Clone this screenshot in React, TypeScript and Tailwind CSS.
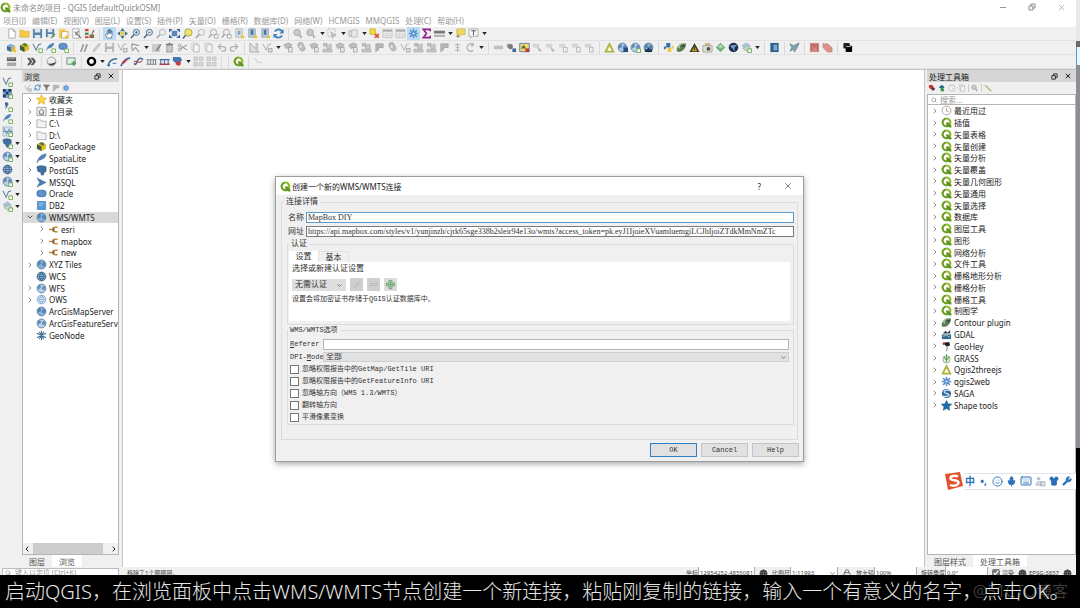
import React from 'react';
import clsx from 'clsx';
import { Search, X, Smile, Mic, Keyboard, Shirt, Wrench, ChevronRight, ChevronDown, ChevronLeft, Lock, Filter, RefreshCw } from 'lucide-react';

const sans = 'font-["Noto_Sans","Noto_Sans_CJK_SC",sans-serif]';
const mono = 'font-["Liberation_Mono","Noto_Sans_CJK_SC",monospace]';

const globe = (fill: string) => (
  <>
    <circle cx="6" cy="6" r="4.8" fill={fill} stroke="#3f6a98" strokeWidth=".8" />
    <path d="M2 3c2-2 4 0 3.500 2S2.500 6 2 8M8 3c2 0 2.500 2 2 4l-2 1c-2-1-2-3 0-5z" fill="#3f6a98" opacity=".65" />
  </>
);

const grid = (fill: string, line: string) => (
  <>
    <circle cx="6" cy="6" r="4.8" fill={fill} stroke={line} strokeWidth=".8" />
    <path d="M1.5 6h9M6 1.2c-2.6 3-2.6 6.6 0 9.6M6 1.2c2.6 3 2.6 6.6 0 9.6M2.2 3.5h7.6M2.2 8.5h7.6" fill="none" stroke={line} strokeWidth=".7" />
  </>
);

const plus = <path d="M7.500 7.500h4v4h-4z" fill="#fff" stroke="#6aa84f" strokeWidth="1" />;
const star = <path d="M9.500 7l.8 1.700 1.700.2-1.300 1.200.3 1.700-1.500-.8-1.500.8.3-1.700L7 8.900l1.700-.2z" fill="#e8c52c" />;

// All glyphs share a 12x12 box
const glyphs: Record<string, React.ReactNode> = {
  qgis: (
    <>
      <path d="M6 1.7a4.2 4.2 0 1 0 2.3 7.7" fill="none" stroke="#6a9c1f" strokeWidth="2.3" />
      <path d="M6 1.7a4.2 4.2 0 0 1 3.7 6.1" fill="none" stroke="#8fba2a" strokeWidth="2.3" />
      <path d="M5.6 5.6h2.2l3.6 3.8v2.1H9.2L5.6 7.8z" fill="#5f9320" />
      <path d="M5.6 5.6h1.6v1.6z" fill="#f3d13a" />
    </>
  ),
  page: <path d="M3 1h4.500L10 3.500V11H3zM7.500 1v2.500H10" fill="#fff" stroke="#9a9a9a" strokeWidth=".8" />,
  folder: <path d="M1 2.500h4l1 1.200h5V10H1z" fill="#f5c945" stroke="#d5a42a" strokeWidth=".6" />,
  folderGray: <path d="M1 2h4l1 1.500h5V10.500H1z" fill="#f3f3f3" stroke="#9a9a9a" strokeWidth=".8" />,
  save: <><path d="M1 1h10v10H1z" fill="#5682a8" /><path d="M3 1h6v4H3zM3 7.500h6V11H3z" fill="#dce8f0" /></>,
  saveAs: <><path d="M1 1h9v9H1z" fill="#5682a8" /><path d="M3 1h5v3.500H3zM3 6.500h5V10H3z" fill="#dce8f0" /><path d="M6 11l4.500-5 1 1L7 11.500z" fill="#62a04a" /></>,
  layout: <><path d="M1 1h7v10H1z" fill="#f1d257" /><path d="M4 4h7v7H4z" fill="#fff" stroke="#b8982b" strokeWidth=".8" />{star}</>,
  layoutMgr: <><path d="M2 1h7v10H2z" fill="#fff" stroke="#999" strokeWidth=".8" /><path d="M4 4l7 7M8 3l-3 5" stroke="#777" strokeWidth="1.300" /></>,
  style: <><path d="M1 1h4v2.500H1z" fill="#cc4a3d" /><path d="M1 5h4v2.500H1z" fill="#4b8d4f" /><path d="M1 9h4v2H1z" fill="#c7472f" /><path d="M7 10l3-8 1.500 1zM6 7h5v4H6z" fill="#8a6a4a" /></>,
  hand: <path d="M3.500 11L1.500 7l1-.7L4 7.500V2.500h1.200V6V1.500h1.200V6V2h1.200v4.200V3.300h1.200V8L8 11z" fill="#fff" stroke="#48657f" strokeWidth=".8" />,
  panSel: <><path d="M6 0l2.500 3.500h-5zM6 12l2.500-3.500h-5zM0 6l3.500-2.500v5zM12 6L8.500 3.500v5z" fill="#3f6f9d" /><path d="M4 4h4v4H4z" fill="#e9d03c" /></>,
  zoomIn: <><circle cx="7" cy="4.700" r="3.300" fill="#dce9f4" stroke="#49688a" strokeWidth="1" /><path d="M4.500 7L1 11" stroke="#49688a" strokeWidth="1.600" /><path d="M5.500 4.700h3M7 3.200v3" stroke="#355" strokeWidth=".8" /></>,
  zoomOut: <><circle cx="7" cy="4.700" r="3.300" fill="#dce9f4" stroke="#49688a" strokeWidth="1" /><path d="M4.500 7L1 11" stroke="#49688a" strokeWidth="1.600" /><path d="M5.500 4.700h3" stroke="#355" strokeWidth=".8" /></>,
  zoomFull: <><path d="M0 1h4L0 5zM12 1H8l4 4zM0 11h4L0 7zM12 11H8l4-4z" fill="#2f62a0" /><path d="M3 3h6v6H3z" fill="#5b86b5" /></>,
  zoomSel: <><circle cx="7" cy="5" r="4" fill="#efe36a" stroke="#a29b45" strokeWidth=".9" /><path d="M4 8l-3 3.500" stroke="#49688a" strokeWidth="1.600" /></>,
  zoomGray: <><circle cx="7" cy="4.700" r="3.300" fill="#eee" stroke="#b2b2b2" strokeWidth="1" /><path d="M4.500 7L1 11" stroke="#a2a2a2" strokeWidth="1.600" /></>,
  zoomGray2: <><circle cx="6" cy="4.700" r="3.300" fill="#eee" stroke="#aaa" strokeWidth="1" /><path d="M3.500 7L1 10.500" stroke="#a2a2a2" strokeWidth="1.600" /><path d="M7 7h4v4H7z" fill="#f5f5f5" stroke="#999" strokeWidth=".8" /></>,
  bookmark: <><path d="M2 1h7v9H2z" fill="#dfe6ec" stroke="#9aa" strokeWidth=".8" /><path d="M4 3h3v5l-1.500-1L4 8z" fill="#8aa3bd" />{star}</>,
  bookmark2: <><path d="M2 1h7v9H2z" fill="#c3d2e2" stroke="#7891ab" strokeWidth=".8" /><path d="M4 2h3v6l-1.500-1L4 8z" fill="#4a73a0" />{star}</>,
  refresh: <><path d="M10.500 5A4.600 4.600 0 0 0 2 4M1.500 7A4.600 4.600 0 0 0 10 8" fill="none" stroke="#3f83bd" strokeWidth="2" /><path d="M11.500 1v5h-4.500zM.5 11V6.500h4.500z" fill="#3f83bd" /></>,
  identify: <><circle cx="4.500" cy="5" r="3.600" fill="#c9c9c9" stroke="#aaa" /><path d="M6 5l5 5-2 .2-1 1.800z" fill="#b2b2b2" /></>,
  select: <><path d="M1 1h8v8H1z" fill="none" stroke="#b5b5b5" strokeDasharray="1.500 1" /><path d="M4 4l6 4-3 .5-1 3z" fill="#c4c4c4" stroke="#999" strokeWidth=".5" /></>,
  stack: <><path d="M1 3h6v6H1z" fill="#ddd" stroke="#b5b5b5" /><path d="M4 2h6v8H4z" fill="#e9e9e9" stroke="#bbb" /></>,
  deselect: <><path d="M1 1h6v6H1z" fill="#f4d92f" stroke="#b7a12a" strokeWidth=".6" /><path d="M6 6h5v5H6z" fill="#ee9570" /><path d="M6.500 6.500l4 4M10.500 6.500l-4 4" stroke="#c8322b" /></>,
  table: <><path d="M1 1.500h10v9H1z" fill="#eee" stroke="#bbb" strokeWidth=".8" /><path d="M1 2h10v2H1z" fill="#aaa" /><path d="M1 6.500h10M1 8.500h10M4.500 3v8M8 3v8" stroke="#ccc" strokeWidth=".6" /></>,
  gear: <><circle cx="6" cy="6" r="3" fill="#5f93cf" /><path d="M6 .8v10.400M.8 6h10.400M2.300 2.300l7.400 7.400M9.700 2.300L2.300 9.700" stroke="#5f93cf" strokeWidth="1.600" /><circle cx="6" cy="6" r="1.200" fill="#dcebf7" /></>,
  sigma: <path d="M10 3.500V1.500H2.500L6 6l-3.500 4.500H10v-2" fill="none" stroke="#8e2290" strokeWidth="1.800" />,
  measure: <><path d="M0 3h12v3H0z" fill="#777" /><path d="M0 7.500h12v2H0z" fill="#aaa" /></>,
  tip: <><path d="M2 1h9v6H7l-3 3V7H2z" fill="#efd95a" stroke="#b9a54a" strokeWidth=".7" /><path d="M1 9l3-2v4z" fill="#8b8b8b" /></>,
  textT: <><path d="M1 1h10v8H5l-2 2V9H1z" fill="#f5f5f5" stroke="#999" strokeWidth=".8" /><path d="M3.500 3h5M6 3v5" stroke="#555" /></>,
  cubes: <><path d="M1 4l4-2 5 2-4 2z" fill="#7fb1d9" /><path d="M1 4l5 2v5L1 9z" fill="#3c6e9f" /><path d="M10 4L6 6v5l4-2z" fill="#dcae45" />{star}</>,
  geopkg: <><path d="M1 3.500L6 1l5 2.500v5L6 11 1 8.500z" fill="#e2be2c" /><path d="M1 3.500l5 2.500v5L1 8.500z" fill="#465d3d" /><path d="M3 3l5 2.500 1-3L6 1z" fill="#56793f" /></>,
  vnew: <><path d="M1 2l3.500 7L7 3l3-1" fill="none" stroke="#67809a" strokeWidth="1.100" />{plus}</>,
  feather: <path d="M1 11C2 5 6 1 11 1c0 4-4 6-8 7z" fill="#5286b8" stroke="#345f8c" strokeWidth=".5" />,
  featherNew: <><path d="M1 10C2 5 5 1 10 1c0 3-3 6-7 6z" fill="#5286b8" />{plus}</>,
  oval: <><rect x="1" y="2.500" width="10" height="7" rx="3" fill="#5f92ca" stroke="#3465a0" strokeWidth=".8" /></>,
  ovalNew: <><rect x="1" y="1.500" width="9" height="6.500" rx="3" fill="#5f92ca" stroke="#3465a0" strokeWidth=".8" />{plus}</>,
  pencils: <path d="M2 11L5 2l2 1-3 8zM6 11l3-9 2 1-3 8z" fill="#a3a3a3" />,
  pencil: <path d="M2 11l1-3 6-7 1.500 1.500-6 7z" fill="#c8c8c8" stroke="#aaa" strokeWidth=".5" />,
  saveGray: <><path d="M1 1h10v10H1z" fill="#b5b5b5" /><path d="M3 1h6v4H3zM3 7.500h6V11H3z" fill="#eee" /></>,
  nodes: <><path d="M1 2l3.500 7L7 3l3-1" fill="none" stroke="#aaa" /><path d="M7 7h4v4H7z" fill="#ddd" stroke="#999" strokeWidth=".8" /></>,
  mesh: <><path d="M1 1h10v10H1z" fill="#dbe5ec" stroke="#8ba2b5" strokeWidth=".7" /><path d="M2 2l3 7 3-6 3 5M1 6h10" fill="none" stroke="#58809f" strokeWidth=".9" />{plus}</>,
  vertex: <path d="M2 10l4-4M2 2l8 2M6 6l4 5M2 2v6" stroke="#9a9a9a" strokeWidth="1.300" fill="none" />,
  formEdit: <><path d="M1 2h9v9H1z" fill="#ccc" /><path d="M5 9l5-7 1.500 1L7 10z" fill="#888" /></>,
  trash: <><path d="M3 3.500h6V11H3z" fill="#c9c9c9" stroke="#888" strokeWidth=".8" /><path d="M2 2.500h8M5 1.500h2" stroke="#777" strokeWidth="1.300" /></>,
  cut: <><path d="M11 3L4 7.500M11 8.500L4 4.500" stroke="#888" /><circle cx="2.800" cy="3.800" r="1.500" fill="none" stroke="#999" /><circle cx="2.800" cy="8.200" r="1.500" fill="none" stroke="#999" /></>,
  copy: <><path d="M2 1h6v8H2z" fill="#eee" stroke="#ccc" /><path d="M4 3h6v8H4z" fill="#f3f3f3" stroke="#aaa" strokeWidth=".8" /></>,
  undo: <path d="M3 5h5a2.500 2.500 0 0 1 0 5H6M5.500 2L2.500 5l3 3" fill="none" stroke="#b2b2b2" strokeWidth="1.400" />,
  redo: <path d="M9 5H4a2.500 2.500 0 0 0 0 5h2M6.500 2l3 3-3 3" fill="none" stroke="#b2b2b2" strokeWidth="1.400" />,
  ruler: <><path d="M1 1v10h10z" fill="#ddd" stroke="#aaa" /><path d="M7 1h3v8H7z" fill="#c5c5c5" /></>,
  shape: <><path d="M1 3l5-2 4 2-2 3-5 1z" fill="#bdbdbd" stroke="#a0a0a0" strokeWidth=".7" /><path d="M6 6h4v5H6z" fill="#e8e8e8" stroke="#999" strokeWidth=".8" /></>,
  shape2: <><path d="M2 4a3 3 0 0 1 6-1l2 4a3 3 0 0 1-5 2z" fill="#bdbdbd" stroke="#a0a0a0" strokeWidth=".8" /><circle cx="5" cy="5" r="1.300" fill="#eee" /></>,
  shape3: <><path d="M1 1h5v4H1z" fill="#bbb" /><path d="M5 4l5-2v5H5zM1 8h5v3H1zM7 8h4v3H7z" fill="#c9c9c9" stroke="#a0a0a0" strokeWidth=".6" /></>,
  flag: <path d="M2 11V2h8v4H5v3" fill="#b8b8b8" stroke="#9c9c9c" strokeWidth=".8" />,
  spine: <path d="M6 1v10M3 3h6M4 6h4M3 9h6" stroke="#b5b5b5" strokeWidth="1.100" />,
  rotate: <path d="M9 9a4 4 0 1 1 0-6M9 1v3H6" fill="none" stroke="#aaa" strokeWidth="1.100" />,
  label: <path d="M1 4h10v4H1z" fill="#c2c2c2" />,
  labelPin: <><path d="M1 2h6v4H1z" fill="#999" /><circle cx="5" cy="5.500" r="2.500" fill="#777" /><path d="M7 7h4v4H7z" fill="#46679b" /></>,
  labelYellow: <><path d="M.8 1.500h10.400v9H.8z" fill="#f2d869" stroke="#5b7fae" /><path d="M2 7l3-4 3 4z" fill="#52724a" /><path d="M7 7h4v4H7z" fill="#bf3f35" /></>,
  labelGray: <><path d="M1 2h7v4H1z" fill="#d5d5d5" /><path d="M5 5l6 4-3 2z" fill="#bdbdbd" /></>,
  labelBox: <><path d="M1 2h7v4H1z" fill="#d5d5d5" /><path d="M6 6h4v5H6z" fill="#eee" stroke="#aaa" strokeWidth=".8" /></>,
  warnTri: <><path d="M6 1l5 10H1z" fill="#c5b92e" stroke="#8ba33b" strokeWidth=".8" /><path d="M6 5l2.500 4.500h-5z" fill="#fff" /></>,
  globe: globe('#b9d4ea'),
  globeDk: globe('#86b2dc'),
  globeGrid: grid('#8fb2d4', '#27507c'),
  globeLt: grid('#e3eff8', '#6f9dc9'),
  globeBlack: grid('#777', '#222'),
  globeNew: <>{globe('#b9d4ea')}{plus}</>,
  globeSearch: <>{globe('#a9cbe8')}<path d="M7 6h5v5H7z" fill="#284f7a" /></>,
  globeBin: <>{globe('#8bb6d9')}<path d="M2 8h3V6h2v2h3v3H2z" fill="#1f3550" /></>,
  python: <><path d="M6 1H3.500v4H1v3h2V6h5V1z" fill="#3b72a6" /><path d="M6 11h3V7h2.500V4H9.500v2.500H5V11z" fill="#f1c93b" /></>,
  contour: <><path d="M1 10C0 6 3 2 8 1l3 1c0 5-4 9-8 9z" fill="#5d7d55" /><path d="M4 7a3 3 0 0 1 5-4" fill="none" stroke="#bdd4a3" strokeWidth="1.200" /><circle cx="8" cy="4" r="1.400" fill="#2f3d50" /></>,
  triDark: <><path d="M6 1l5.500 10H.5z" fill="#403a24" /><path d="M6 4l3 6H3z" fill="#c9a52f" /><path d="M5.400 5h1.200v4H5.400z" fill="#403a24" /></>,
  camera: <><path d="M3 1h6v3H3z" fill="#c9b890" /><path d="M1 4h10v7H1z" fill="#e0ddd4" stroke="#8a8676" strokeWidth=".7" /><circle cx="7" cy="7.500" r="2" fill="#4c4c4c" /></>,
  diamond: <><path d="M6 .8L11.200 6 6 11.200.8 6z" fill="#6fb575" /><path d="M6 3l3 2-3 2-3-2z" fill="#b7dcb3" /></>,
  navy: <><circle cx="6" cy="6" r="5.200" fill="#1d2f52" /><path d="M2 4l8-1-3 3v4L5 7z" fill="#84a0c8" /></>,
  layersG: <><path d="M1 4l5-3 4 3-5 3z" fill="#a9c8e0" stroke="#7d9dba" strokeWidth=".6" /><path d="M2 7l5-3 4 3-5 3z" fill="#c3d5cb" stroke="#7d9f80" strokeWidth=".6" />{plus}</>,
  book: <><path d="M1.500 1h9v10h-9z" fill="#2d5f90" /><path d="M5 3h4v6H5z" fill="#7ea9ce" /></>,
  bird: <path d="M1 2l4 2 6-3-2 5-3 5-1-3-4 2 2-4z" fill="#7da3c2" stroke="#6b8173" strokeWidth=".8" />,
  red: <><path d="M1 1h10v10H1z" fill="#cf8780" /><path d="M3 9V3h2l1 3 1-3h2v6" fill="none" stroke="#b35850" /></>,
  red2: <path d="M1 2h5l5 4v5H6L1 6z" fill="#d9938b" stroke="#c07067" strokeDasharray="1 1" />,
  black: <><rect x="1.500" y="1" width="7" height="6" rx="1" fill="#222" /><rect x="4" y="4" width="7" height="7" rx="1" fill="#000" /><path d="M4.500 5h5" stroke="#fff" strokeWidth=".8" /></>,
  bricks: <><path d="M1 1.500h10v4H1z" fill="#5a5a5a" /><path d="M2 3h8" stroke="#ddd" strokeDasharray="1.500 1" /><path d="M1 7h10v4H1z" fill="#aaa" /></>,
  arrows: <path d="M1 2l3 4-3 4h3l3-4-3-4zM5 2l3 4-3 4h3l3-4-3-4z" fill="#5b5b5b" />,
  orb: <><circle cx="6" cy="6" r="4.800" fill="#ececec" stroke="#888" strokeWidth=".8" /><path d="M2 8a4.800 4.800 0 0 0 8.800-2C9 8 5 9 2 8z" fill="#444" /></>,
  addGreen: <><path d="M1 2h9v7H1z" fill="#dfeee4" stroke="#6b8f83" /><path d="M6 8h5M8.500 5.500v5" stroke="#4ea24c" strokeWidth="2" /></>,
  ring: <circle cx="6" cy="6" r="3.900" fill="#fff" stroke="#000" strokeWidth="2.600" />,
  curve: <><path d="M1 11C2 5 5 3 11 3" fill="none" stroke="#3c6da0" strokeWidth="1.700" /><circle cx="2" cy="10" r="1.300" fill="#3c6da0" /><path d="M6 8h4" stroke="#3c6da0" /></>,
  curveRed: <><path d="M1 11C3 6 6 3 11 2" fill="none" stroke="#3c6da0" strokeWidth="2" /><path d="M3 8l4-4" stroke="#cc3340" strokeWidth="2.200" /></>,
  wave: <><path d="M1 8c2 3 3-1 4-3s3-4 6-1" fill="none" stroke="#3c6da0" strokeWidth="1.800" /><path d="M1 6c2-2 6 4 9-1" fill="none" stroke="#c23a4a" strokeWidth="1.200" /></>,
  rail: <path d="M.5 4h11M.5 9h11M2 4v5M5 4v5M8 4v5M10.500 4v5" stroke="#77808b" strokeWidth="1.100" />,
  rail2: <><path d="M.5 4h11M2 4v5M6 4v5M10 4v5" stroke="#426d9a" strokeWidth="1.200" /><path d="M.5 9h11" stroke="#b03c4a" strokeWidth="1.600" /></>,
  blob: <><path d="M1 1h8l2 3-2 3H3L1 5z" fill="#3e7ab3" /><path d="M4 6h5l1 3-3 2-3-2z" fill="#c54242" /></>,
  scatter: <><path d="M1 1h4v4H1zM7 1h4v4H7zM1 7h4v4H1zM7 7h4v4H7z" fill="#d8d8d8" stroke="#b5b5b5" strokeWidth=".7" /></>,
  faint: <path d="M2 2l3 5M5 7h5" stroke="#c9c9c9" />,
  star: <path d="M6 .5l1.700 3.700 4 .4-3 2.700.9 4L6 9.300l-3.600 2 .9-4-3-2.700 4-.4z" fill="#f9d548" stroke="#d3a531" strokeWidth=".6" />,
  home: <><path d="M1 1.500h10v9H1z" fill="#f3f3f3" stroke="#888" strokeWidth=".8" /><path d="M3 6l3-2.500L9 6M4 6v3h4V6" fill="none" stroke="#555" strokeWidth=".9" /></>,
  elephant: <path d="M1 2c3-2 8-1 10 0v5l-2 1-1 3H6L5 8 2 7z" fill="#41719f" stroke="#2e567d" strokeWidth=".6" />,
  elephantNew: <><path d="M1 2c3-2 7-1 9 0v4l-2 1-1 3H5L4 7 2 6z" fill="#41719f" stroke="#2e567d" strokeWidth=".6" />{plus}</>,
  mssql: <path d="M1 1l10 5L1 11l3-5z" fill="#4d7fb5" stroke="#355f8c" strokeWidth=".5" />,
  db2: <><rect x="1" y="1" width="10" height="10" rx="1" fill="#5b97d0" /><path d="M3 4h6M3 6h4" stroke="#a8caea" /></>,
  link: <><path d="M1 6h4M10.500 3.500H8A2.300 2.300 0 0 0 8 8.500h2.500" fill="none" stroke="#c08a3a" strokeWidth="1.500" /><path d="M5 4h2v4H5z" fill="#7a5a2c" /></>,
  geonode: <path d="M6 .8v10.400M1 3.500l10 5M1 8.500l10-5M3.500 2l5 8M8.500 2l-5 8" stroke="#3f6f95" strokeWidth="1.200" />,
  checker: <path d="M1 1h10v10H1z" fill="#6f97bf" />,
  raster: <><path d="M1 1h10v10H1z" fill="#7fa3c6" /><path d="M1 1h3v3H1zM7 1h3v3H7zM4 4h3v3H4zM1 7h3v3H1zM7 7h4v4H7z" fill="#173a63" />{plus}</>,
  comma: <><path d="M3 3a2 2 0 1 1 3 2c0 2-1 3-3 4 1-1 1.500-2 1-3z" fill="#3e6e9f" />{plus}</>,
  clock: <><circle cx="6" cy="6" r="4.800" fill="#fff" stroke="#999" strokeWidth=".9" /><path d="M6 3v3.500l2.500 1" fill="none" stroke="#888" strokeWidth=".8" /></>,
  gdal: <><path d="M1 6h10v5H1z" fill="#31688c" /><path d="M2 5l3-3 2 2 3-3v4z" fill="#2d3d4c" /><path d="M2 8l4-1 4 2" stroke="#9ccbe2" fill="none" /></>,
  geohey: <><path d="M2 2l7-1 1 4-4 1z" fill="#222" /><path d="M7 6l-1 5" stroke="#777" /><circle cx="3" cy="3" r="1.300" fill="#b33" /></>,
  grass: <><circle cx="6" cy="7" r="4" fill="#e7f2e3" stroke="#7aa072" strokeWidth=".8" /><path d="M6 10V1M6 8L3 4M6 8l3-4" stroke="#64a356" strokeWidth="1.100" /></>,
  saga: <><circle cx="6" cy="6" r="5" fill="#2b6298" /><path d="M10 3C4 1 1 5 6 6s3 4-4 3" stroke="#cfe3f3" strokeWidth="1.500" fill="none" /></>,
  starBlue: <path d="M6 .5l1.700 3.700 4 .4-3 2.700.9 4L6 9.300l-3.600 2 .9-4-3-2.700 4-.4z" fill="#1d70ae" stroke="#155888" strokeWidth=".6" />,
  redDot: <><path d="M1 2l5-1 3 4-3 4-4-3z" fill="#c63434" /><path d="M6 5l5 2-4 4z" fill="#333" /></>,
  greenDot: <><path d="M1 5l5-4 4 4-4 3z" fill="#2a6d86" /><path d="M4 7h5v4H4z" fill="#459245" /></>,
  wrenchY: <path d="M1 2l3 1 7 7-1 1-7-7z" fill="#c3b45d" stroke="#98936e" strokeWidth=".5" />,
};

const Glyph = ({ name, className = 'size-[11px]' }: { name: string; className?: string }) => (
  <svg viewBox="0 0 12 12" className={clsx('shrink-0', className)} aria-hidden="true">
    {glyphs[name]}
  </svg>
);

// '|' is a separator, 'v' a drop-down caret, a leading '*' marks a pressed button
const toolbarRows = [
  'page folder save saveAs layout layoutMgr style | *hand panSel zoomIn zoomOut zoomGray zoomFull zoomSel zoomGray zoomGray2 zoomGray2 bookmark bookmark2 bookmark2 refresh | identify identify v select v stack v deselect table table *gear sigma measure v tip textT v',
  'cubes geopkg vnew featherNew ovalNew | pencils pencil saveGray nodes vertex v formEdit trash cut copy copy undo redo | ruler nodes v shape shape2 shape shape3 shape shape shape3 flag shape2 nodes shape3 shape3 flag spine rotate v | label labelPin labelYellow labelGray labelGray labelBox labelBox labelBox | warnTri globeSearch globeNew globeBin | python contour triDark camera diamond navy layersG v | book | bird | red red2 | black',
  'bricks | arrows | orb | addGreen | ring v curve curveRed wave rail rail2 blob v scatter scatter | | qgis | faint',
];

const Caret = () => (
  <span className="flex w-2 shrink-0 justify-center">
    <svg viewBox="0 0 6 4" className="h-[3px] w-[5px]"><path d="M0 0h6L3 4z" fill="#222" /></svg>
  </span>
);

const Toolbar = ({ items }: { items: string }) => (
  <div className="flex h-[14px] items-center border-b border-[#e2e2e2] bg-[#f0f0f0] pl-[5px]">
    {items.split(' ').map((item, i) => {
      if (item === '|') return <span key={i} className="flex h-3 w-[7px] shrink-0 justify-center"><i className="w-px bg-[#d9d9d9]" /></span>;
      if (item === 'v') return <Caret key={i} />;
      const active = item.startsWith('*');
      const name = active ? item.slice(1) : item;
      return (
        <button key={i} aria-label={name} className={clsx('flex h-[13px] w-[13px] shrink-0 items-center justify-center', active && 'bg-[#bcdcf4]')}>
          <Glyph name={name} />
        </button>
      );
    })}
  </div>
);

const menus = ['项目(J)', '编辑(E)', '视图(V)', '图层(L)', '设置(S)', '插件(P)', '矢量(O)', '栅格(R)', '数据库(D)', '网络(W)', 'HCMGIS', 'MMQGIS', '处理(C)', '帮助(H)'];

const sideTools: [string, boolean][] = [
  ['vnew', false], ['raster', false], ['comma', false], ['featherNew', false], ['mesh', false], ['elephantNew', true],
  ['globeNew', true], ['globeGrid', false], ['globeNew', true], ['vnew', true], ['layersG', true],
];

interface TreeNode {
  label: string;
  icon: string;
  state?: 'open' | 'closed';
  child?: boolean;
  selected?: boolean;
}

const browserTree: TreeNode[] = [
  { label: '收藏夹', icon: 'star', state: 'closed' },
  { label: '主目录', icon: 'home', state: 'closed' },
  { label: 'C:\\', icon: 'folderGray', state: 'closed' },
  { label: 'D:\\', icon: 'folderGray', state: 'closed' },
  { label: 'GeoPackage', icon: 'geopkg', state: 'closed' },
  { label: 'SpatiaLite', icon: 'feather' },
  { label: 'PostGIS', icon: 'elephant', state: 'closed' },
  { label: 'MSSQL', icon: 'mssql' },
  { label: 'Oracle', icon: 'oval' },
  { label: 'DB2', icon: 'db2' },
  { label: 'WMS/WMTS', icon: 'globeDk', state: 'open', selected: true },
  { label: 'esri', icon: 'link', state: 'closed', child: true },
  { label: 'mapbox', icon: 'link', state: 'closed', child: true },
  { label: 'new', icon: 'link', state: 'closed', child: true },
  { label: 'XYZ Tiles', icon: 'globeDk', state: 'closed' },
  { label: 'WCS', icon: 'globeGrid' },
  { label: 'WFS', icon: 'globe', state: 'closed' },
  { label: 'OWS', icon: 'globeLt', state: 'closed' },
  { label: 'ArcGisMapServer', icon: 'globeDk' },
  { label: 'ArcGisFeatureServer', icon: 'globe' },
  { label: 'GeoNode', icon: 'geonode' },
];

const qgisGroups = ['插值', '矢量表格', '矢量创建', '矢量分析', '矢量覆盖', '矢量几何图形', '矢量通用', '矢量选择', '数据库', '图层工具', '图形', '网络分析', '文件工具', '栅格地形分析', '栅格分析', '栅格工具', '制图学'];

const toolboxTree: TreeNode[] = [
  { label: '最近用过', icon: 'clock', state: 'closed' },
  ...qgisGroups.map((label): TreeNode => ({ label, icon: 'qgis', state: 'closed' })),
  { label: 'Contour plugin', icon: 'contour', state: 'closed' },
  { label: 'GDAL', icon: 'gdal', state: 'closed' },
  { label: 'GeoHey', icon: 'geohey', state: 'closed' },
  { label: 'GRASS', icon: 'grass', state: 'closed' },
  { label: 'Qgis2threejs', icon: 'warnTri', state: 'closed' },
  { label: 'qgis2web', icon: 'gear', state: 'closed' },
  { label: 'SAGA', icon: 'saga', state: 'closed' },
  { label: 'Shape tools', icon: 'starBlue', state: 'closed' },
];

const Tree = ({ nodes, className }: { nodes: TreeNode[]; className: string }) => (
  <ul className={clsx('grid auto-rows-fr', className)}>
    {nodes.map(node => (
      <li key={node.label} className={clsx('flex min-h-0 items-center overflow-hidden whitespace-nowrap', node.child && 'pl-3', node.selected && 'bg-[#d9d9d9]')}>
        <span className="flex w-[13px] shrink-0 justify-center text-[#555]">
          {node.state === 'closed' && <ChevronRight size={8} strokeWidth={2} />}
          {node.state === 'open' && <ChevronDown size={8} strokeWidth={3} />}
        </span>
        <Glyph name={node.icon} />
        <span className="ml-[2px]">{node.label}</span>
      </li>
    ))}
  </ul>
);

const Restore = ({ className }: { className: string }) => (
  <svg viewBox="0 0 8 8" className={className}><path d="M1 3h4v4H1zM3 3V1h4v4H5" fill="none" stroke="currentColor" /></svg>
);

const DockTitle = ({ title }: { title: string }) => (
  <div className="flex h-3 shrink-0 items-center bg-[#d6d6d6] px-[2px]">
    <h2 className="flex-1">{title}</h2>
    <button aria-label="浮动" className="mr-[6px]"><Restore className="size-[7px]" /></button>
    <button aria-label="关闭" className="mr-[2px]"><X size={8} strokeWidth={3} /></button>
  </div>
);

const DockTabs = ({ tabs, active }: { tabs: string[]; active: string }) => (
  <div role="tablist" className="flex h-3 shrink-0 text-[#555]">
    {tabs.map(tab => (
      <button key={tab} role="tab" aria-selected={tab === active} className={clsx('px-[7px]', tab === active && 'bg-white')}>{tab}</button>
    ))}
  </div>
);

const options = ['忽略权限报告中的GetMap/GetTile URI', '忽略权限报告中的GetFeatureInfo URI', '忽略轴方向（WMS 1.3/WMTS）', '翻转轴方向', '平滑像素变换'];

const groupBox = 'min-w-0 border border-[#dcdcdc]';
const legend = 'h-[10px] px-[2px] leading-[10px]';
const textInput = 'h-[11px] min-w-0 flex-1 border bg-white px-[1px] font-["Liberation_Serif",serif] outline-none';

const ConnectionDialog = () => (
  <div role="dialog" aria-label="创建一个新的WMS/WMTS连接" className="absolute top-[176px] left-[275px] flex h-[286px] w-[529px] flex-col border border-[#9d9d9d] bg-[#f0f0f0] shadow-[0_2px_6px_rgba(0,0,0,0.35)]">
    <div className="flex h-[18px] shrink-0 items-center bg-white pr-[10px] pl-1">
      <Glyph name="qgis" />
      <h1 className="ml-[1px] flex-1">创建一个新的WMS/WMTS连接</h1>
      <button aria-label="帮助" className="mr-[22px]">?</button>
      <button aria-label="关闭"><X size={10} strokeWidth={1.5} className="text-[#333]" /></button>
    </div>

    <form className={clsx('flex flex-1 flex-col px-[5px] pt-[2px] text-[#333]', mono)} onSubmit={e => e.preventDefault()}>
      <fieldset className={clsx(groupBox, 'h-[243px] pr-[3px] pl-[5px]')}>
        <legend className={clsx(legend, '-ml-[3px]')}>连接详情</legend>
        <div className="mt-[5px] flex h-[11px] items-center">
          <label htmlFor="name" className="w-[19px] pl-[1px]">名称</label>
          <input id="name" defaultValue="MapBox DIY" className={clsx(textInput, 'border-[#5a9bd0]')} />
        </div>
        <div className="mt-[3px] flex h-[11px] items-center">
          <label htmlFor="url" className="w-[19px] pl-[1px]">网址</label>
          <input id="url" defaultValue="https://api.mapbox.com/styles/v1/yunjinzh/cjrk65sge338b2sleir94e13o/wmts?access_token=pk.eyJ1IjoieXVuamluemgiLCJhIjoiZTdkMmNmZTc" className={clsx(textInput, 'border-[#7a7a7a]')} />
        </div>

        {/* Authentication */}
        <fieldset className={clsx(groupBox, 'mt-[2px] pr-[3px] pb-[3px] pl-[1px]')}>
          <legend className={legend}>认证</legend>
          <div role="tablist" className="mt-[2px] flex h-[11px]">
            <button type="button" role="tab" aria-selected="true" className="w-[29px] bg-white">设置</button>
            <button type="button" role="tab" aria-selected="false" className="w-[31px] border border-b-0 border-[#e2e2e2]">基本</button>
          </div>
          <div className="h-[59px] bg-white px-[3px] pt-[1px]">
            <label htmlFor="auth" className="block h-3 leading-3">选择或新建认证设置</label>
            <div className="mt-[3px] flex items-center gap-1">
              <span className="relative flex">
                <select id="auth" className="h-3 w-[54px] appearance-none bg-[#dedede] pl-[3px]"><option>无需认证</option></select>
                <ChevronDown size={7} className="pointer-events-none absolute top-[3px] right-[3px]" />
              </span>
              <button type="button" aria-label="编辑" className="flex size-[13px] items-center justify-center bg-[#cfcfcf]"><Glyph name="pencil" className="size-2" /></button>
              <button type="button" aria-label="移除" className="flex size-[13px] items-center justify-center bg-[#cfcfcf] text-[#aaa]"><i className="h-[3px] w-[7px] border border-[#bbb]" /></button>
              <button type="button" aria-label="新建" className="flex size-[13px] items-center justify-center bg-[#dcdcdc]">
                <svg viewBox="0 0 12 12" className="size-[11px]"><path d="M4.500 1.500h3v3h3v3h-3v3h-3v-3h-3v-3h3z" fill="#c3dfc5" stroke="#5fa069" /><path d="M6 3v6M3 6h6" stroke="#5fa069" /></svg>
              </button>
            </div>
            <p className="mt-[3px] text-[7px] leading-[10px]">设置会将加密证书存储于QGIS认证数据库中。</p>
          </div>
        </fieldset>

        {/* WMS options */}
        <fieldset className={clsx(groupBox, 'pr-1 pb-[1px] pl-[2px]')}>
          <legend className={clsx(legend, '-ml-[2px] text-[7px]')}>WMS/WMTS选项</legend>
          <div className="mt-1 flex h-[11px] items-center">
            <label htmlFor="referer" className="w-[33px] text-[7px]"><u>R</u>eferer</label>
            <input id="referer" className={clsx(textInput, 'border-[#b5b5b5]')} />
          </div>
          <div className="relative mt-[2px] flex h-[10px] items-center">
            <label htmlFor="dpi" className="w-[33px] text-[7px] whitespace-nowrap">DPI-<u>M</u>ode</label>
            <select id="dpi" className="h-[10px] min-w-0 flex-1 appearance-none border border-[#cfcfcf] bg-[#e1e1e1] pl-[2px] leading-[8px]"><option>全部</option></select>
            <ChevronDown size={7} className="pointer-events-none absolute top-[2px] right-[2px]" />
          </div>
          <div className="mt-[1px]">
            {options.map(option => (
              <label key={option} className="flex h-3 items-center text-[7px]">
                <input type="checkbox" className="mr-[3px] size-[9px] appearance-none border border-[#777] bg-white" />
                {option}
              </label>
            ))}
          </div>
        </fieldset>
      </fieldset>

      <div className="mt-[3px] -mr-[1px] flex justify-end gap-1 text-[7px]">
        <button className="h-[14px] w-[47px] border border-[#2f7fc4] bg-[#e1e1e1]">OK</button>
        <button type="button" className="h-[14px] w-[47px] border border-[#c4c4c4] bg-[#e1e1e1]">Cancel</button>
        <button type="button" className="h-[14px] w-[47px] border border-[#c4c4c4] bg-[#e1e1e1]">Help</button>
      </div>
    </form>
  </div>
);

const InputMethodBar = () => (
  <div className="absolute top-[472px] right-1 flex h-[18px] items-center text-[#2a72b8]">
    <svg viewBox="0 0 20 20" className="size-5">
      <path d="M1 3l15-2 3 14L4 19z" fill="#e2522a" />
      <path d="M14 5.500c-3-1.500-8-.5-7.500 2s8 1 8 4-5 4-8.500 2.500" fill="none" stroke="#fff" strokeWidth="2.400" />
    </svg>
    <div className="flex h-[17px] items-center gap-[3px] border-y border-[#dfe5ea] bg-white pr-1 pl-[1px]">
      <span className="w-[10px] text-[10px] leading-4 font-bold">中</span>
      <span className="w-[11px] text-center text-[10px] leading-4 font-bold">•,</span>
      <Smile size={11} />
      <Mic size={11} fill="currentColor" />
      <Keyboard size={12} />
      <svg viewBox="0 0 12 12" className="size-[11px]"><circle cx="4" cy="3" r="2" fill="#b5bfca" /><path d="M1 10c0-5 6-5 6 0zM6 6h5v5H6z" fill="#d5dbe2" stroke="#9ca8b5" strokeWidth=".7" /></svg>
      <Shirt size={10} fill="currentColor" />
      <Wrench size={10} fill="currentColor" />
    </div>
  </div>
);

const statusInput = 'border border-[#aaa] bg-white px-[1px]';

const StatusBar = () => (
  <footer className="h-2 shrink-0 overflow-hidden bg-[#f0f0f0] text-[6px] leading-3 text-[#444]">
    <div className="flex h-3 items-center whitespace-nowrap">
      <label className="ml-[2px] flex h-[11px] w-[117px] shrink-0 items-center border border-[#bbb] bg-white px-[2px]">
        <Search size={6} className="text-[#777]" />
        <input aria-label="定位" placeholder="键入以定位 (Ctrl+K)" className="ml-1 min-w-0 flex-1 text-[7px] outline-none placeholder:text-[#999]" />
      </label>
      <span className="ml-2 flex-1">移除了1个图图层。</span>
      <label htmlFor="coord">坐标</label>
      <input id="coord" defaultValue="12954252,4855081" className={clsx(statusInput, 'w-[57px]')} />
      <Glyph name="globeBlack" className="mx-1 size-[9px]" />
      <label htmlFor="scale">比例尺</label>
      <span className="relative flex items-center">
        <select id="scale" className={clsx(statusInput, 'w-[48px] appearance-none')}><option>1:11993</option></select>
        <ChevronDown size={7} className="pointer-events-none absolute right-[2px]" />
      </span>
      <Lock size={8} className="mx-[5px] shrink-0" />
      <label htmlFor="mag">放大镜</label>
      <input id="mag" defaultValue="100%" className={clsx(statusInput, 'w-[43px]')} />
      <label htmlFor="rot" className="ml-1">旋转角度</label>
      <input id="rot" defaultValue="0.0°" className={clsx(statusInput, 'w-[43px]')} />
      <label className="ml-1 flex items-center gap-[2px]">
        <input type="checkbox" defaultChecked className="size-2 accent-[#777]" />渲染
      </label>
      <button className="ml-1 flex items-center"><Glyph name="globeBlack" className="mr-[2px] size-[9px]" />EPSG:3857</button>
      <Glyph name="globeBlack" className="mx-1 size-[9px]" />
    </div>
  </footer>
);

const App: React.FC = () => (
  <div className={clsx('relative flex h-screen flex-col overflow-hidden bg-white text-[8px] leading-[11px] text-[#222]', sans)}>
    <div className="flex min-h-0 flex-1">
      <div className="flex min-w-0 flex-1 flex-col">
        {/* Title bar */}
        <header className="flex h-[14px] shrink-0 items-center pr-[10px] text-[#888]">
          <Glyph name="qgis" />
          <h1 className="ml-[2px] flex-1">未命名的项目 - QGIS [defaultQuickOSM]</h1>
          <button aria-label="最小化" className="mr-[22px] h-px w-[6px] bg-[#999]" />
          <button aria-label="还原" className="mr-[21px]"><Restore className="size-2" /></button>
          <button aria-label="关闭"><X size={9} strokeWidth={1.5} /></button>
        </header>
        <nav className="flex h-[13px] shrink-0 items-center gap-[6px] pl-[3px] text-[#999]">
          {menus.map(menu => <button key={menu}>{menu}</button>)}
        </nav>
        {toolbarRows.map(row => <Toolbar key={row} items={row} />)}

        <div className="flex min-h-0 flex-1 border-t border-[#c4c4c4] bg-[#f0f0f0]">
          {/* Data source buttons */}
          <aside className="w-[22px] shrink-0 pt-[5px] pl-[2px]">
            <div className="flex h-[138px] flex-col justify-between">
              {sideTools.map(([name, caret], i) => (
                <button key={i} aria-label={name} className="flex h-3 items-center"><Glyph name={name} />{caret && <Caret />}</button>
              ))}
            </div>
          </aside>

          {/* Browser panel */}
          <section className="flex w-[97px] shrink-0 flex-col">
            <DockTitle title="浏览" />
            <div className="flex h-[11px] shrink-0 items-center gap-[2px] pl-[2px] text-[#3f83bd]">
              <Glyph name="nodes" className="size-2" />
              <RefreshCw size={7} strokeWidth={3} />
              <Filter size={7} fill="#777" className="text-[#777]" />
              <Glyph name="flag" className="size-2" />
              <Glyph name="gear" className="size-2" />
            </div>
            <div className="flex min-h-0 flex-1 flex-col justify-between border border-[#b5b5b5] bg-white">
              <Tree nodes={browserTree} className="h-[247px]" />
              <div className="flex h-[11px] items-center justify-between bg-[#f0f0f0]">
                <ChevronLeft size={8} strokeWidth={3} />
                <span className="ml-[2px] h-full w-[70px] bg-[#cdcdcd]" />
                <span className="flex-1" />
                <ChevronRight size={8} strokeWidth={3} />
              </div>
            </div>
            <DockTabs tabs={['图层', '浏览']} active="浏览" />
          </section>

          <main className="ml-[3px] min-w-0 flex-1 border-x border-[#c4c4c4] bg-white" />

          {/* Processing toolbox */}
          <section className="ml-[2px] flex w-[149px] shrink-0 flex-col">
            <DockTitle title="处理工具箱" />
            <div className="flex h-3 shrink-0 items-center gap-[2px] pl-[1px]">
              <Glyph name="redDot" className="size-2" />
              <Glyph name="greenDot" className="size-2" />
              <Glyph name="clock" className="size-2" />
              <Glyph name="copy" className="size-2" />
              <i className="h-2 w-px bg-[#ccc]" />
              <Glyph name="identify" className="size-2" />
              <i className="h-2 w-px bg-[#ccc]" />
              <Glyph name="wrenchY" className="size-2" />
            </div>
            <label className="flex h-[11px] shrink-0 items-center border border-[#b5b5b5] bg-white pl-[3px]">
              <Search size={6} className="text-[#777]" />
              <input aria-label="搜索" placeholder="搜索..." className="ml-[3px] min-w-0 flex-1 outline-none placeholder:text-[#999]" />
            </label>
            <div className="min-h-0 flex-1 border border-t-0 border-[#b5b5b5] bg-white">
              <Tree nodes={toolboxTree} className="h-[306px]" />
            </div>
            <DockTabs tabs={['图层样式', '处理工具箱']} active="处理工具箱" />
          </section>
        </div>
        <StatusBar />
      </div>

      {/* Window peeking out behind */}
      <div className="flex w-1 shrink-0 flex-col">
        <i className="h-[41px] bg-[#e9e9e9]" />
        <i className="h-[6px] bg-[#6a6a6a]" />
        <i className="h-[18px] border-l border-[#4a9bd8] bg-[#eef4f8]" />
        <i className="flex-[3] bg-[#8a8f96]" />
        <i className="flex-1 bg-black" />
      </div>
    </div>

    {/* Subtitle */}
    <p className="relative h-[33px] shrink-0 overflow-hidden bg-black pl-[5px] text-[20px] leading-[33px] font-light whitespace-nowrap text-[#e6e6e6]">
      启动QGIS，在浏览面板中点击WMS/WMTS节点创建一个新连接，粘贴刚复制的链接，输入一个有意义的名字，点击OK。
      <span className="absolute right-3 bottom-0 text-[16px] text-white/30">@51CTO博客</span>
    </p>

    <ConnectionDialog />
    <InputMethodBar />
  </div>
);

export default App;
